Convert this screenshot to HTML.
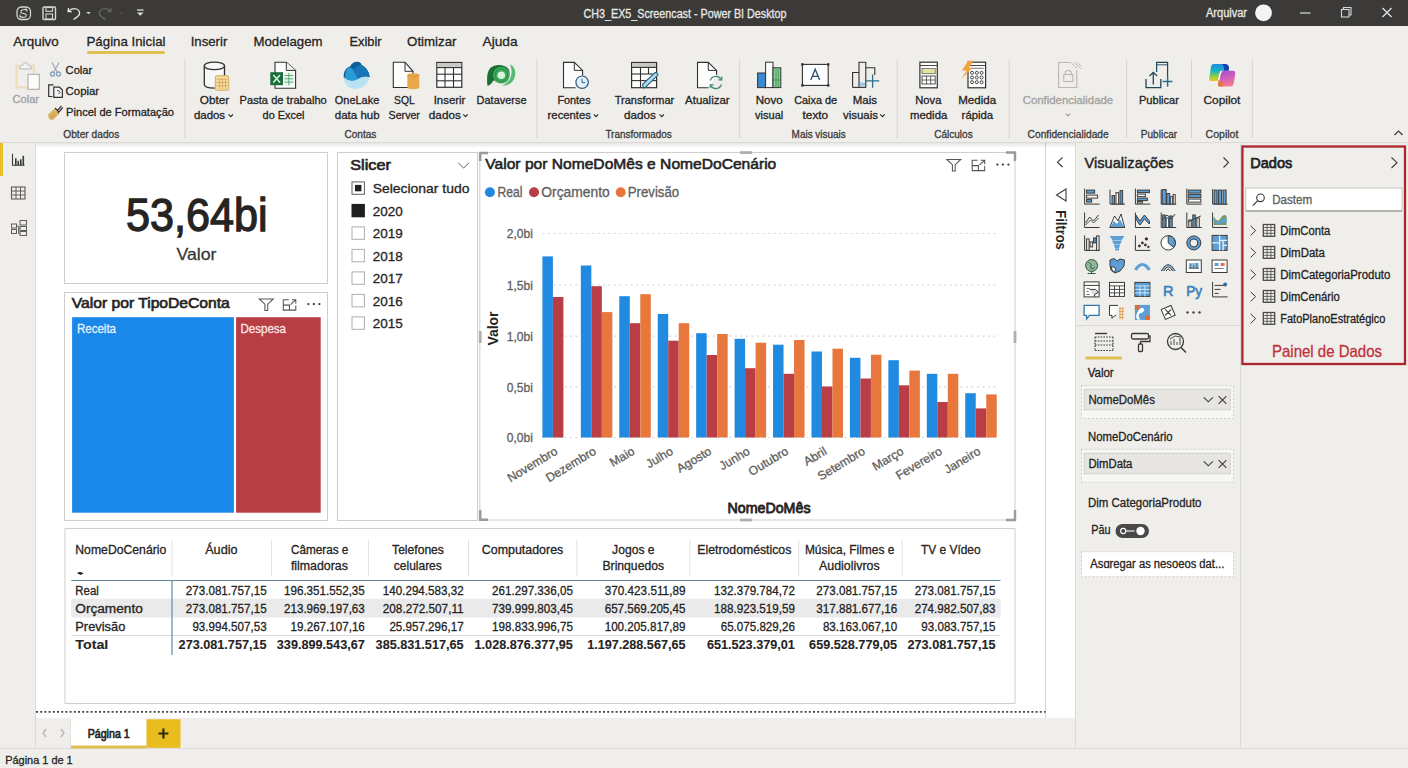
<!DOCTYPE html>
<html><head><meta charset="utf-8"><title>Power BI Desktop</title>
<style>
html,body{margin:0;padding:0;width:1408px;height:768px;overflow:hidden;background:#efeeeb;}
svg{display:block;font-family:"Liberation Sans",sans-serif;}
</style></head><body>
<svg width="1408" height="768" viewBox="0 0 1408 768">
<rect x="0" y="0" width="1408" height="768" fill="#efeeeb" />
<rect x="0" y="0" width="1408" height="26" fill="#3b3a38" />
<rect x="0" y="26" width="1408" height="116" fill="#efeeeb" />
<line x1="0" y1="142.5" x2="1408" y2="142.5" stroke="#dcdad6" stroke-width="1" />
<rect x="0" y="143" width="35" height="606" fill="#efeeeb" />
<line x1="35.5" y1="143" x2="35.5" y2="749" stroke="#dddbd7" stroke-width="1" />
<rect x="0" y="143" width="3" height="33" fill="#e6c02a" />
<rect x="36" y="143" width="1009" height="575" fill="#ffffff" />
<rect x="1046" y="143" width="29" height="575" fill="#ffffff" />
<line x1="1045.5" y1="143" x2="1045.5" y2="718" stroke="#d6d4d0" stroke-width="1" />
<line x1="1075.5" y1="143" x2="1075.5" y2="749" stroke="#dcdad6" stroke-width="1" />
<rect x="1076" y="143" width="164" height="606" fill="#efeeeb" />
<line x1="1240.5" y1="143" x2="1240.5" y2="749" stroke="#dcdad6" stroke-width="1" />
<rect x="1241" y="143" width="167" height="606" fill="#efeeeb" />
<rect x="36" y="718" width="1009" height="31" fill="#efeeeb" />
<line x1="0" y1="748.5" x2="1408" y2="748.5" stroke="#dddbd7" stroke-width="1" />
<rect x="0" y="749" width="1408" height="19" fill="#efeeeb" />
<defs><linearGradient id="rsh" x1="0" y1="0" x2="0" y2="1"><stop offset="0" stop-color="#000" stop-opacity="0.10"/><stop offset="1" stop-color="#000" stop-opacity="0"/></linearGradient></defs>
<rect x="36" y="143" width="1039" height="5" fill="url(#rsh)" />
<text x="583.5" y="17.5" font-size="12.5" fill="#e8e8e6" stroke="#e8e8e6" stroke-width="0.3" textLength="203" lengthAdjust="spacingAndGlyphs" >CH3_EX5_Screencast - Power BI Desktop</text>
<text x="1206" y="17.3" font-size="12" fill="#e8e8e6" stroke="#e8e8e6" stroke-width="0.3" textLength="41" lengthAdjust="spacingAndGlyphs" >Arquivar</text>
<circle cx="1263.5" cy="12.8" r="8.4" fill="#f4f4f4" />
<line x1="1300" y1="13" x2="1310.5" y2="13" stroke="#e0e0e0" stroke-width="1.2" />
<rect x="1341.5" y="9.5" width="7.5" height="7.5" fill="none" stroke="#d8d8d8" stroke-width="1.1" />
<path d="M1343.5,9.5 V7.5 H1351 V15 H1349" fill="none" stroke="#d8d8d8" stroke-width="1.1" />
<path d="M1382.5,8 L1391.5,17 M1391.5,8 L1382.5,17" fill="none" stroke="#e6e6e6" stroke-width="1.2" />
<rect x="17" y="7" width="13.5" height="12.5" fill="none" stroke="#d6d6d4" stroke-width="1.3" rx="4.5" />
<path d="M27,10.5 Q24.5,8.8 22,10 Q20,11.5 21.5,13 L25.5,14 Q27,15.2 25.5,17 Q23,18 20.5,16.5 M20,14.5 V17 H22.5 M24,9.5 L26.5,9.2 L27.2,11.5" fill="none" stroke="#d6d6d4" stroke-width="1.1" />
<rect x="43" y="7" width="12.5" height="12.5" fill="none" stroke="#d6d6d4" stroke-width="1.4" rx="1" />
<rect x="46" y="7.5" width="6.5" height="3.8" fill="none" stroke="#d6d6d4" stroke-width="1.1" />
<rect x="46" y="14" width="6.5" height="5" fill="none" stroke="#d6d6d4" stroke-width="1.1" />
<path d="M68.5,8 L68,11.5 L71.8,11.8 M68.3,11.3 Q72,7.5 76.5,9 Q80,10.5 79.5,14 Q79,16 73.5,19.5" fill="none" stroke="#e6e6e4" stroke-width="1.3" />
<path d="M86.2,12 h4.6 l-2.3,2.3 z" fill="#d6d6d4" />
<path d="M110.5,8 L111,11.5 L107.2,11.8 M110.7,11.3 Q107,7.5 102.5,9 Q99,10.5 99.5,14 Q100,16 105.5,19.5" fill="none" stroke="#666664" stroke-width="1.3" />
<circle cx="121.5" cy="12.8" r="0.9" fill="#666664" />
<line x1="137" y1="10" x2="143.5" y2="10" stroke="#e0e0de" stroke-width="1.3" />
<path d="M137,12.5 h6.5 l-3.25,3.2 z" fill="#e0e0de" />
<text x="13.3" y="45.9" font-size="13.5" fill="#252423" stroke="#252423" stroke-width="0.3" textLength="45.5" lengthAdjust="spacingAndGlyphs" >Arquivo</text>
<text x="86.5" y="45.9" font-size="13.5" fill="#252423" stroke="#252423" stroke-width="0.3" textLength="79" lengthAdjust="spacingAndGlyphs" >Página Inicial</text>
<text x="190.7" y="45.9" font-size="13.5" fill="#252423" stroke="#252423" stroke-width="0.3" textLength="36.6" lengthAdjust="spacingAndGlyphs" >Inserir</text>
<text x="253.5" y="45.9" font-size="13.5" fill="#252423" stroke="#252423" stroke-width="0.3" textLength="69" lengthAdjust="spacingAndGlyphs" >Modelagem</text>
<text x="349.5" y="45.9" font-size="13.5" fill="#252423" stroke="#252423" stroke-width="0.3" textLength="32" lengthAdjust="spacingAndGlyphs" >Exibir</text>
<text x="407.1" y="45.9" font-size="13.5" fill="#252423" stroke="#252423" stroke-width="0.3" textLength="49.4" lengthAdjust="spacingAndGlyphs" >Otimizar</text>
<text x="482.5" y="45.9" font-size="13.5" fill="#252423" stroke="#252423" stroke-width="0.3" textLength="35" lengthAdjust="spacingAndGlyphs" >Ajuda</text>
<rect x="87" y="51" width="78" height="3" fill="#dcc052" rx="1.5" />
<text x="12.6" y="103.3" font-size="11.2" fill="#a19f9d" stroke="#a19f9d" stroke-width="0.3" textLength="26.4" lengthAdjust="spacingAndGlyphs" >Colar</text>
<text x="65.6" y="73.9" font-size="11.2" fill="#252423" stroke="#252423" stroke-width="0.3" textLength="26.6" lengthAdjust="spacingAndGlyphs" >Colar</text>
<text x="65.6" y="95" font-size="11.2" fill="#252423" stroke="#252423" stroke-width="0.3" textLength="33.5" lengthAdjust="spacingAndGlyphs" >Copiar</text>
<text x="66.1" y="116" font-size="11.2" fill="#252423" stroke="#252423" stroke-width="0.3" textLength="107.9" lengthAdjust="spacingAndGlyphs" >Pincel de Formatação</text>
<text x="63.300000000000004" y="138.2" font-size="10.5" fill="#3b3a39" stroke="#3b3a39" stroke-width="0.3" textLength="56.0" lengthAdjust="spacingAndGlyphs" >Obter dados</text>
<line x1="184.8" y1="59" x2="184.8" y2="138" stroke="#d6d4d0" stroke-width="1" />
<line x1="536.8" y1="59" x2="536.8" y2="138" stroke="#d6d4d0" stroke-width="1" />
<line x1="739.6" y1="59" x2="739.6" y2="138" stroke="#d6d4d0" stroke-width="1" />
<line x1="897.2" y1="59" x2="897.2" y2="138" stroke="#d6d4d0" stroke-width="1" />
<line x1="1009.2" y1="59" x2="1009.2" y2="138" stroke="#d6d4d0" stroke-width="1" />
<line x1="1126.6" y1="59" x2="1126.6" y2="138" stroke="#d6d4d0" stroke-width="1" />
<line x1="1191.5" y1="59" x2="1191.5" y2="138" stroke="#d6d4d0" stroke-width="1" />
<line x1="1252.3" y1="59" x2="1252.3" y2="138" stroke="#d6d4d0" stroke-width="1" />
<text x="199.79999999999998" y="103.8" font-size="11.2" fill="#252423" stroke="#252423" stroke-width="0.3" textLength="29.4" lengthAdjust="spacingAndGlyphs" >Obter</text>
<text x="193.9" y="118.7" font-size="11.2" fill="#252423" stroke="#252423" stroke-width="0.3" textLength="31.2" lengthAdjust="spacingAndGlyphs" >dados</text>
<text x="239.6" y="103.8" font-size="11.2" fill="#252423" stroke="#252423" stroke-width="0.3" textLength="87.2" lengthAdjust="spacingAndGlyphs" >Pasta de trabalho</text>
<text x="262.6" y="118.7" font-size="11.2" fill="#252423" stroke="#252423" stroke-width="0.3" textLength="41.8" lengthAdjust="spacingAndGlyphs" >do Excel</text>
<text x="334.8" y="103.8" font-size="11.2" fill="#252423" stroke="#252423" stroke-width="0.3" textLength="44.5" lengthAdjust="spacingAndGlyphs" >OneLake</text>
<text x="334.8" y="118.7" font-size="11.2" fill="#252423" stroke="#252423" stroke-width="0.3" textLength="44.8" lengthAdjust="spacingAndGlyphs" >data hub</text>
<text x="394.0" y="103.8" font-size="11.2" fill="#252423" stroke="#252423" stroke-width="0.3" textLength="20.7" lengthAdjust="spacingAndGlyphs" >SQL</text>
<text x="388.6" y="118.7" font-size="11.2" fill="#252423" stroke="#252423" stroke-width="0.3" textLength="31.3" lengthAdjust="spacingAndGlyphs" >Server</text>
<text x="433.70000000000005" y="103.8" font-size="11.2" fill="#252423" stroke="#252423" stroke-width="0.3" textLength="31.7" lengthAdjust="spacingAndGlyphs" >Inserir</text>
<text x="428.8" y="118.7" font-size="11.2" fill="#252423" stroke="#252423" stroke-width="0.3" textLength="32.1" lengthAdjust="spacingAndGlyphs" >dados</text>
<text x="476.6" y="103.8" font-size="11.2" fill="#252423" stroke="#252423" stroke-width="0.3" textLength="49.9" lengthAdjust="spacingAndGlyphs" >Dataverse</text>
<text x="344.5" y="138.2" font-size="10.5" fill="#3b3a39" stroke="#3b3a39" stroke-width="0.3" textLength="31.9" lengthAdjust="spacingAndGlyphs" >Contas</text>
<text x="557.4" y="103.8" font-size="11.2" fill="#252423" stroke="#252423" stroke-width="0.3" textLength="33.2" lengthAdjust="spacingAndGlyphs" >Fontes</text>
<text x="547.6" y="118.7" font-size="11.2" fill="#252423" stroke="#252423" stroke-width="0.3" textLength="43.3" lengthAdjust="spacingAndGlyphs" >recentes</text>
<text x="614.8000000000001" y="103.8" font-size="11.2" fill="#252423" stroke="#252423" stroke-width="0.3" textLength="59.4" lengthAdjust="spacingAndGlyphs" >Transformar</text>
<text x="624.1" y="118.7" font-size="11.2" fill="#252423" stroke="#252423" stroke-width="0.3" textLength="31.8" lengthAdjust="spacingAndGlyphs" >dados</text>
<text x="685.1" y="103.8" font-size="11.2" fill="#252423" stroke="#252423" stroke-width="0.3" textLength="44.5" lengthAdjust="spacingAndGlyphs" >Atualizar</text>
<text x="605.4" y="138.2" font-size="10.5" fill="#3b3a39" stroke="#3b3a39" stroke-width="0.3" textLength="66.4" lengthAdjust="spacingAndGlyphs" >Transformados</text>
<text x="755.7" y="103.8" font-size="11.2" fill="#252423" stroke="#252423" stroke-width="0.3" textLength="27.0" lengthAdjust="spacingAndGlyphs" >Novo</text>
<text x="755.1" y="118.7" font-size="11.2" fill="#252423" stroke="#252423" stroke-width="0.3" textLength="28.2" lengthAdjust="spacingAndGlyphs" >visual</text>
<text x="794.2" y="103.8" font-size="11.2" fill="#252423" stroke="#252423" stroke-width="0.3" textLength="42.8" lengthAdjust="spacingAndGlyphs" >Caixa de</text>
<text x="802.6" y="118.7" font-size="11.2" fill="#252423" stroke="#252423" stroke-width="0.3" textLength="25.6" lengthAdjust="spacingAndGlyphs" >texto</text>
<text x="852.8000000000001" y="103.8" font-size="11.2" fill="#252423" stroke="#252423" stroke-width="0.3" textLength="24.2" lengthAdjust="spacingAndGlyphs" >Mais</text>
<text x="843.0" y="118.7" font-size="11.2" fill="#252423" stroke="#252423" stroke-width="0.3" textLength="34.9" lengthAdjust="spacingAndGlyphs" >visuais</text>
<text x="791.6" y="138.2" font-size="10.5" fill="#3b3a39" stroke="#3b3a39" stroke-width="0.3" textLength="54.2" lengthAdjust="spacingAndGlyphs" >Mais visuais</text>
<text x="915.3000000000001" y="103.8" font-size="11.2" fill="#252423" stroke="#252423" stroke-width="0.3" textLength="26.1" lengthAdjust="spacingAndGlyphs" >Nova</text>
<text x="910.0" y="118.7" font-size="11.2" fill="#252423" stroke="#252423" stroke-width="0.3" textLength="37.3" lengthAdjust="spacingAndGlyphs" >medida</text>
<text x="958.2" y="103.8" font-size="11.2" fill="#252423" stroke="#252423" stroke-width="0.3" textLength="37.9" lengthAdjust="spacingAndGlyphs" >Medida</text>
<text x="961.6" y="118.7" font-size="11.2" fill="#252423" stroke="#252423" stroke-width="0.3" textLength="31.6" lengthAdjust="spacingAndGlyphs" >rápida</text>
<text x="934.2" y="138.2" font-size="10.5" fill="#3b3a39" stroke="#3b3a39" stroke-width="0.3" textLength="38.5" lengthAdjust="spacingAndGlyphs" >Cálculos</text>
<text x="1022.7" y="103.8" font-size="11.2" fill="#a19f9d" stroke="#a19f9d" stroke-width="0.3" textLength="90.5" lengthAdjust="spacingAndGlyphs" >Confidencialidade</text>
<text x="1027.6" y="138.2" font-size="10.5" fill="#3b3a39" stroke="#3b3a39" stroke-width="0.3" textLength="81.1" lengthAdjust="spacingAndGlyphs" >Confidencialidade</text>
<text x="1139.0" y="103.8" font-size="11.2" fill="#252423" stroke="#252423" stroke-width="0.3" textLength="39.9" lengthAdjust="spacingAndGlyphs" >Publicar</text>
<text x="1140.8" y="138.2" font-size="10.5" fill="#3b3a39" stroke="#3b3a39" stroke-width="0.3" textLength="36.3" lengthAdjust="spacingAndGlyphs" >Publicar</text>
<text x="1203.5" y="103.8" font-size="11.2" fill="#252423" stroke="#252423" stroke-width="0.3" textLength="36.9" lengthAdjust="spacingAndGlyphs" >Copilot</text>
<text x="1205.6" y="138.2" font-size="10.5" fill="#3b3a39" stroke="#3b3a39" stroke-width="0.3" textLength="32.8" lengthAdjust="spacingAndGlyphs" >Copilot</text>
<path d="M228.60000000000002,114.4 l2.2,2.2 l2.2,-2.2" fill="none" stroke="#252423" stroke-width="1.1" />
<path d="M463.3,114.4 l2.2,2.2 l2.2,-2.2" fill="none" stroke="#252423" stroke-width="1.1" />
<path d="M593.8,114.4 l2.2,2.2 l2.2,-2.2" fill="none" stroke="#252423" stroke-width="1.1" />
<path d="M659.5999999999999,114.4 l2.2,2.2 l2.2,-2.2" fill="none" stroke="#252423" stroke-width="1.1" />
<path d="M880.3,114.4 l2.2,2.2 l2.2,-2.2" fill="none" stroke="#252423" stroke-width="1.1" />
<path d="M1065.8,113.7 l2.2,2.2 l2.2,-2.2" fill="none" stroke="#a19f9d" stroke-width="1.1" />
<path d="M1394.5,135 l4,-4 l4,4" fill="none" stroke="#3b3a39" stroke-width="1.2" />
<path d="M19.5,65.5 H16.5 V87.5 H27" fill="none" stroke="#eddcb6" stroke-width="2" />
<path d="M31,65.5 H34 V73" fill="none" stroke="#eddcb6" stroke-width="2" />
<path d="M19.5,69 Q19.5,65 23,65 Q24,62.3 25.5,62.3 Q27,62.3 28,65 Q31.5,65 31.5,69 Z" fill="#f3f2ef" stroke="#b8b6b2" stroke-width="1" />
<rect x="28" y="74.3" width="11.3" height="15" fill="#fbfbfa" stroke="#aeaca8" stroke-width="1.1" />
<path d="M52,62.5 L57.5,72.5 M59,62.5 L53.5,72.5" fill="none" stroke="#9aa2ab" stroke-width="1.1" />
<circle cx="52.5" cy="74" r="2" fill="none" stroke="#8aa0b8" stroke-width="1.3" />
<circle cx="58.5" cy="74" r="2" fill="none" stroke="#8aa0b8" stroke-width="1.3" />
<path d="M53.5,84.8 H48.7 V96.5 H52.5" fill="none" stroke="#323130" stroke-width="1.2" />
<path d="M53.8,87.2 H59.5 L62.4,90 V97.4 H53.8 Z" fill="#f6f6f6" stroke="#323130" stroke-width="1.2" />
<path d="M57,90.5 q2.5,-0.5 3,2 M58.5,94 l1.5,-1.5" fill="none" stroke="#323130" stroke-width="0.9" />
<path d="M48,114.5 L54.5,108.5 L59.5,113.5 L53.5,119.5 Q51,120.5 49.5,119 Q48.8,118.2 48.6,117.5 Z" fill="#dcb462" />
<path d="M49.5,117.5 L53.5,113.5 M51,119 L55.5,114.5" fill="none" stroke="#b88e3e" stroke-width="0.7" />
<path d="M55,108 L57.5,110.5 L61.5,105.8 M57.5,110.5 L58.5,112.5 L62.8,107.5" fill="none" stroke="#323130" stroke-width="1.2" />
<path d="M204.3,66 V84.3 Q204.3,88.2 214.4,88.2 Q224.5,88.2 224.5,84.3 V66 Z" fill="#f8f8f7" />
<path d="M204.3,66 V84.3 Q204.3,88.2 214.8,88.2 M224.5,66 V76" fill="none" stroke="#323130" stroke-width="1.3" />
<ellipse cx="214.4" cy="65.9" rx="10.1" ry="3.8" fill="#f8f8f7" stroke="#323130" stroke-width="1.3"/>
<rect x="215.3" y="75.8" width="13.4" height="14.4" fill="#f6dca2" stroke="#d4a957" stroke-width="1" rx="1.2" />
<line x1="216.5" y1="79.2" x2="227.5" y2="79.2" stroke="#c99a4a" stroke-width="0.7" />
<line x1="216.5" y1="82.5" x2="227.5" y2="82.5" stroke="#c99a4a" stroke-width="0.7" />
<line x1="216.5" y1="85.8" x2="227.5" y2="85.8" stroke="#c99a4a" stroke-width="0.7" />
<line x1="219.5" y1="79" x2="219.5" y2="89" stroke="#c99a4a" stroke-width="0.6" />
<line x1="222.5" y1="79" x2="222.5" y2="89" stroke="#c99a4a" stroke-width="0.6" />
<line x1="225.5" y1="79" x2="225.5" y2="89" stroke="#c99a4a" stroke-width="0.6" />
<path d="M275,62.2 H286.3 L295.6,70.4 V88.3 H275 Z" fill="#fdfdfd" stroke="#323130" stroke-width="1.1" />
<path d="M286.3,62.2 V70.4 H295.6" fill="#f0f0f0" stroke="#323130" stroke-width="1" />
<rect x="284" y="72.5" width="10" height="13" fill="#e8f6ec" />
<line x1="284.5" y1="75.5" x2="293.3" y2="75.5" stroke="#3f9a63" stroke-width="0.8" />
<line x1="284.5" y1="78.8" x2="293.3" y2="78.8" stroke="#3f9a63" stroke-width="0.8" />
<line x1="284.5" y1="82.1" x2="293.3" y2="82.1" stroke="#3f9a63" stroke-width="0.8" />
<line x1="288.8" y1="73" x2="288.8" y2="85.5" stroke="#3f9a63" stroke-width="0.8" />
<rect x="270.3" y="72.2" width="12.7" height="13" fill="#1c6b3a" />
<path d="M273.3,75 L280,82.5 M280,75 L273.3,82.5" fill="none" stroke="#c6f2d2" stroke-width="1.7" />
<path d="M343.6,77 Q344.5,88.5 354.5,89 Q366.5,88.8 369.8,77 Q362,75 356,79.5 Q350,82.5 343.6,77 Z" fill="#b9e3f3" />
<path d="M343.6,77 Q343,69 350,66.5 Q352.5,61.5 357.5,61.8 Q361,62.2 361.5,64.8 Q368.5,68 369.8,77 Q362,75 356,79.5 Q350,82.5 343.6,77 Z" fill="#0f5e9c" />
<path d="M346.8,69 Q350.5,66.5 353,69.5 L358.2,79 Q352,82.5 345.6,78.5 Q344.6,72.5 346.8,69 Z" fill="#2b9bd6" />
<path d="M353,69.5 Q357,65.5 361.5,65 Q367.5,68.5 369.5,76.5 Q363,75 358.2,79 Z" fill="#1776b8" />
<path d="M393.3,62.2 H405 L413,71.3 V87.5 H393.3 Z" fill="#fdfdfd" stroke="#323130" stroke-width="1.1" />
<path d="M405,62.2 V71.3 H413" fill="none" stroke="#323130" stroke-width="1" />
<path d="M407.3,75.5 Q407.3,73.3 413.3,73.3 Q419.3,73.3 419.3,75.5 V87 Q419.3,89.2 413.3,89.2 Q407.3,89.2 407.3,87 Z" fill="#e9a94a" />
<path d="M407.3,75.5 Q413.3,78 419.3,75.5" fill="none" stroke="#cf8e30" stroke-width="0.8" />
<rect x="436.8" y="62.5" width="25" height="24.8" fill="#fdfdfd" stroke="#323130" stroke-width="1.2" />
<rect x="437.4" y="63.1" width="23.8" height="4.4" fill="#c9c8c5" />
<line x1="436.8" y1="67.6" x2="461.8" y2="67.6" stroke="#323130" stroke-width="1.1" />
<line x1="436.8" y1="74.2" x2="461.8" y2="74.2" stroke="#323130" stroke-width="1.1" />
<line x1="436.8" y1="80.8" x2="461.8" y2="80.8" stroke="#323130" stroke-width="1.1" />
<line x1="445" y1="67.6" x2="445" y2="87.3" stroke="#323130" stroke-width="1.1" />
<line x1="453.5" y1="67.6" x2="453.5" y2="87.3" stroke="#323130" stroke-width="1.1" />
<path d="M487.5,86 Q485.8,73 490.5,67.8 Q496,63 505.5,66.5 Q511,69.5 509,75 L493,81 Q491,85 487.5,86 Z" fill="#1a6f34" />
<path d="M502,85.8 Q512.5,85.5 515,76.5 Q516.5,67.5 510,64.3 Q513.5,73 509.5,79.5 Q506.5,84 502,85.8 Z" fill="#56bb70" />
<circle cx="501.3" cy="75.2" r="8.4" fill="#3ea85c" />
<circle cx="501.3" cy="75.2" r="6.3" fill="none" stroke="#2d8d49" stroke-width="1" />
<circle cx="501.3" cy="75.2" r="3.8" fill="#d6f6d6" />
<path d="M575.5,87.7 H563.5 V62.4 H574.3 L582.6,70.4 V75.6" fill="#fdfdfd" stroke="#323130" stroke-width="1.1" />
<path d="M574.3,62.4 V70.4 H582.6" fill="none" stroke="#323130" stroke-width="1" />
<circle cx="582.1" cy="82.2" r="6.2" fill="#e3f1fa" stroke="#2b5b7e" stroke-width="1.2" />
<path d="M582,78.8 V82.6 H585" fill="none" stroke="#2b5b7e" stroke-width="1" />
<rect x="631.6" y="62.5" width="25" height="25.2" fill="#fdfdfd" stroke="#323130" stroke-width="1.2" />
<rect x="632.2" y="63.1" width="23.8" height="4.2" fill="#c9c8c5" />
<line x1="631.6" y1="67.4" x2="656.6" y2="67.4" stroke="#323130" stroke-width="1.1" />
<line x1="631.6" y1="74" x2="656.6" y2="74" stroke="#323130" stroke-width="1.1" />
<line x1="631.6" y1="80.6" x2="656.6" y2="80.6" stroke="#323130" stroke-width="1.1" />
<line x1="640.5" y1="67.4" x2="640.5" y2="87.7" stroke="#323130" stroke-width="1.1" />
<line x1="648.5" y1="67.4" x2="648.5" y2="74" stroke="#323130" stroke-width="1.1" />
<path d="M643.5,88 L642.5,84.5 L655,72.5 Q657.5,72.3 658,74.8 L645.8,87 Z" fill="#b5dcf0" stroke="#2a6282" stroke-width="1.1" />
<path d="M708.5,87.7 H697.5 V62.4 H708.3 L716.6,70.4 V75" fill="#fdfdfd" stroke="#323130" stroke-width="1.1" />
<path d="M708.3,62.4 V70.4 H716.6" fill="none" stroke="#323130" stroke-width="1" />
<path d="M710.3,80.5 A6,6 0 0 1 721.2,79.5 M721.5,84.5 A6,6 0 0 1 710.6,85.5" fill="none" stroke="#3d8b73" stroke-width="1.3" />
<path d="M721.8,76.5 V79.8 H718.5 M710.2,88 V84.8 H713.5" fill="none" stroke="#3d8b73" stroke-width="1.2" />
<rect x="757.6" y="73" width="8" height="14.6" fill="#3b8ad0" stroke="#323130" stroke-width="1" />
<rect x="765.6" y="62.2" width="7.4" height="25.4" fill="#fdfdfd" stroke="#323130" stroke-width="1" />
<rect x="773" y="67.8" width="7.8" height="19.8" fill="#8fd09a" stroke="#323130" stroke-width="1" />
<line x1="776" y1="69" x2="776" y2="87" stroke="#2f8a44" stroke-width="0.8" />
<line x1="778.3" y1="69" x2="778.3" y2="87" stroke="#2f8a44" stroke-width="0.8" />
<line x1="773" y1="80" x2="781" y2="80" stroke="#2f8a44" stroke-width="0.8" />
<rect x="802.4" y="64.4" width="25.8" height="21" fill="#fbfdff" stroke="#323130" stroke-width="1.1" />
<rect x="801.1999999999999" y="63.2" width="2.4" height="2.4" fill="#323130" />
<rect x="827.0" y="63.2" width="2.4" height="2.4" fill="#323130" />
<rect x="801.1999999999999" y="84.2" width="2.4" height="2.4" fill="#323130" />
<rect x="827.0" y="84.2" width="2.4" height="2.4" fill="#323130" />
<path d="M810.8,80 L815.2,69.2 L819.6,80 M812.4,76.3 H818" fill="none" stroke="#2b4f6c" stroke-width="1.3" />
<path d="M852.6,87.4 V72.5 H859 M859,87.4 V62.2 H865.8 V87.4 M865.8,67.8 H874.8 V75" fill="none" stroke="#323130" stroke-width="1.1" />
<line x1="852.6" y1="87.4" x2="866" y2="87.4" stroke="#323130" stroke-width="1.1" />
<path d="M872.6,74.5 V87.8 M866,80.8 H879.2" fill="none" stroke="#2b6f8e" stroke-width="1.3" />
<rect x="860" y="82.5" width="5" height="4" fill="#9ac8e6" />
<rect x="919.9" y="62.2" width="17.4" height="25.6" fill="#fdfdfd" stroke="#323130" stroke-width="1.2" />
<line x1="920" y1="65.5" x2="937.2" y2="65.5" stroke="#323130" stroke-width="0.9" />
<rect x="922" y="68.5" width="13.2" height="5.2" fill="#e5e3a2" stroke="#555" stroke-width="0.7" />
<rect x="922" y="76" width="13.2" height="8" fill="none" stroke="#444" stroke-width="0.9" />
<line x1="922" y1="80" x2="935.2" y2="80" stroke="#444" stroke-width="0.8" />
<line x1="926.5" y1="76" x2="926.5" y2="84" stroke="#444" stroke-width="0.8" />
<line x1="930.7" y1="76" x2="930.7" y2="84" stroke="#444" stroke-width="0.8" />
<rect x="968" y="62.2" width="17.6" height="25.6" fill="#fdfdfd" stroke="#323130" stroke-width="1.2" />
<line x1="968" y1="65.5" x2="985.6" y2="65.5" stroke="#323130" stroke-width="0.9" />
<line x1="970" y1="68.3" x2="983.6" y2="68.3" stroke="#555" stroke-width="0.8" />
<circle cx="972.0" cy="72.8" r="1.5" fill="none" stroke="#333" stroke-width="0.9" />
<circle cx="976.8" cy="72.8" r="1.5" fill="none" stroke="#333" stroke-width="0.9" />
<circle cx="981.6" cy="72.8" r="1.5" fill="none" stroke="#333" stroke-width="0.9" />
<circle cx="972.0" cy="77.5" r="1.5" fill="none" stroke="#333" stroke-width="0.9" />
<circle cx="976.8" cy="77.5" r="1.5" fill="none" stroke="#333" stroke-width="0.9" />
<circle cx="981.6" cy="77.5" r="1.5" fill="none" stroke="#333" stroke-width="0.9" />
<circle cx="972.0" cy="82.2" r="1.5" fill="none" stroke="#333" stroke-width="0.9" />
<circle cx="976.8" cy="82.2" r="1.5" fill="none" stroke="#333" stroke-width="0.9" />
<circle cx="981.6" cy="82.2" r="1.5" fill="none" stroke="#333" stroke-width="0.9" />
<path d="M968,60.8 L962,70.5 H966.5 L961.5,78.8 L972.5,67.8 H968.5 L973.8,60.8 Z" fill="#f0a53a" />
<path d="M1070.5,62.5 H1058.6 V87.5 H1076.8 V70" fill="none" stroke="#b9b7b3" stroke-width="1.1" />
<path d="M1071,62.5 L1077,68.5 M1074.5,62.3 L1081,68.8 M1077,62 L1081.5,66.5" fill="none" stroke="#b9b7b3" stroke-width="1" />
<rect x="1063.8" y="74.5" width="9" height="7" fill="none" stroke="#b9b7b3" stroke-width="1.1" />
<path d="M1065.3,74.5 V72 Q1068.3,68.8 1071.3,72 V74.5" fill="none" stroke="#b9b7b3" stroke-width="1.1" />
<path d="M1156.6,72 V62.4 H1167.6 V86.5" fill="none" stroke="#20465c" stroke-width="1.2" />
<line x1="1156.6" y1="64.8" x2="1167.6" y2="64.8" stroke="#20465c" stroke-width="0.9" />
<path d="M1146,79 V87.6 H1160.8 V79" fill="none" stroke="#20465c" stroke-width="1.3" />
<path d="M1153.3,84.5 V72.3 M1149.5,76 L1153.3,72.3 L1157.1,76" fill="none" stroke="#20465c" stroke-width="1.3" />
<path d="M1167.5,76.5 V86.5 M1162.5,81.5 H1172.5" fill="none" stroke="#2e6f8c" stroke-width="1.3" />
<defs><linearGradient id="cpL" x1="0" y1="0" x2="0" y2="1"><stop offset="0" stop-color="#1f8ee0"/><stop offset="0.4" stop-color="#17b2c4"/><stop offset="0.75" stop-color="#9ccf3a"/><stop offset="1" stop-color="#e9c430"/></linearGradient><linearGradient id="cpR" x1="0" y1="0" x2="0.3" y2="1"><stop offset="0" stop-color="#9d52d6"/><stop offset="0.6" stop-color="#d75fb8"/><stop offset="1" stop-color="#f27c92"/></linearGradient></defs>
<path d="M1213.5,64 H1225 Q1228.5,64 1229,67.5 L1228.5,70.8 H1222.5 Q1220.5,71 1220,73.5 L1218.5,79.5 Q1218,81 1216,81 H1211 Q1208.8,81 1209.2,78.5 L1211,66.5 Q1211.5,64 1213.5,64 Z" fill="url(#cpL)" />
<path d="M1222,64 H1225 Q1228.5,64 1229,67.5 L1228.5,70.8 H1224 Q1224.5,66 1222,64 Z" fill="#1a3fa8" />
<path d="M1222.5,70.8 H1233 Q1235.7,71 1235.3,73.8 L1233.6,84 Q1233,86.6 1230.5,86.6 H1219.5 Q1217.5,86.6 1218,84.5 L1220,73.5 Q1220.5,71 1222.5,70.8 Z" fill="url(#cpR)" />
<path d="M1218.6,80.5 L1218,84.3 Q1217.9,86.6 1220,86.6 H1222.8 Q1223.2,83.5 1221.5,80.8 Z" fill="#e27a3a" />
<path d="M1222,71.2 Q1220.5,71.5 1220,74 L1218.8,80" fill="none" stroke="#ffffff" stroke-width="1.4" />
<path d="M12.5,153.8 V165.3 H24.5" fill="none" stroke="#3b3a39" stroke-width="1.1" />
<rect x="15" y="158.3" width="1.6" height="7" fill="#3b3a39" />
<rect x="17.5" y="160.8" width="1.6" height="4.5" fill="#3b3a39" />
<rect x="20" y="159.3" width="1.6" height="6" fill="#3b3a39" />
<rect x="22.5" y="155.8" width="1.6" height="9.5" fill="#3b3a39" />
<rect x="11.5" y="187" width="13.5" height="12" fill="none" stroke="#605e5c" stroke-width="1.1" />
<line x1="11.5" y1="191" x2="25" y2="191" stroke="#605e5c" stroke-width="1" />
<line x1="11.5" y1="195" x2="25" y2="195" stroke="#605e5c" stroke-width="1" />
<line x1="16" y1="187" x2="16" y2="199" stroke="#605e5c" stroke-width="1" />
<line x1="20.5" y1="187" x2="20.5" y2="199" stroke="#605e5c" stroke-width="1" />
<rect x="11.5" y="224" width="5" height="4" fill="none" stroke="#605e5c" stroke-width="1" />
<rect x="11.5" y="229.5" width="5" height="4" fill="none" stroke="#605e5c" stroke-width="1" />
<rect x="20" y="220.5" width="6.5" height="4.5" fill="none" stroke="#605e5c" stroke-width="1" />
<rect x="20" y="226.5" width="6.5" height="4" fill="none" stroke="#605e5c" stroke-width="1" />
<rect x="20" y="231.5" width="6.5" height="4" fill="none" stroke="#605e5c" stroke-width="1" />
<path d="M16.5,226 H18.5 V233.5 H20 M18.5,228.5 H20" fill="none" stroke="#605e5c" stroke-width="0.9" />
<rect x="64.5" y="152.5" width="263" height="131" fill="#ffffff" stroke="#d0cecc" stroke-width="1" />
<rect x="64.5" y="292.5" width="263" height="228" fill="#ffffff" stroke="#d0cecc" stroke-width="1" />
<rect x="337.5" y="152.5" width="140" height="368" fill="#ffffff" stroke="#d0cecc" stroke-width="1" />
<rect x="65" y="528.5" width="950" height="175" fill="#ffffff" stroke="#d0cecc" stroke-width="1" />
<text x="126" y="230.5" font-size="46" fill="#252423" stroke="#252423" stroke-width="1.3" textLength="141.5" lengthAdjust="spacingAndGlyphs" >53,64bi</text>
<text x="176.5" y="259.6" font-size="16.5" fill="#3b3a39" stroke="#3b3a39" stroke-width="0.3" textLength="40" lengthAdjust="spacingAndGlyphs" >Valor</text>
<text x="71.8" y="308.4" font-size="14.5" fill="#252423" stroke="#252423" stroke-width="0.65" textLength="158" lengthAdjust="spacingAndGlyphs" >Valor por TipoDeConta</text>
<path d="M259.3,298.9 H273.3 L267.7,304.2 V310.5 H264.90000000000003 V304.2 Z" fill="none" stroke="#555453" stroke-width="1.05" />
<path d="M288.8,299.7 H283.3 V310.1 H295.8 V305.5" fill="none" stroke="#555453" stroke-width="1.05" />
<path d="M283.3,305.1 H289.5 V310.1" fill="none" stroke="#555453" stroke-width="1.05" />
<path d="M290.5,304.7 L295.6,299.9 M291.8,299.7 H295.8 V303.7" fill="none" stroke="#555453" stroke-width="1.05" />
<circle cx="308.4" cy="304.1" r="1.15" fill="#3b3a39" />
<circle cx="313.9" cy="304.1" r="1.15" fill="#3b3a39" />
<circle cx="319.4" cy="304.1" r="1.15" fill="#3b3a39" />
<rect x="72.1" y="317.2" width="161.8" height="195.5" fill="#1a88e9" />
<rect x="236.1" y="317.2" width="84.6" height="195.5" fill="#b83e45" />
<text x="77" y="332.5" font-size="12.5" fill="#e2f2ff" stroke="#e2f2ff" stroke-width="0.3" textLength="39" lengthAdjust="spacingAndGlyphs" >Receita</text>
<text x="240.5" y="332.5" font-size="12.5" fill="#fde6e6" stroke="#fde6e6" stroke-width="0.3" textLength="45.5" lengthAdjust="spacingAndGlyphs" >Despesa</text>
<text x="350.3" y="169.7" font-size="14.5" fill="#252423" stroke="#252423" stroke-width="0.65" textLength="40.5" lengthAdjust="spacingAndGlyphs" >Slicer</text>
<path d="M458.3,162.8 L463.6,168.1 L469,162.8" fill="none" stroke="#605e5c" stroke-width="1" />
<rect x="352" y="181.9" width="12.4" height="12.4" fill="#ffffff" stroke="#605e5c" stroke-width="1" />
<rect x="355" y="184.9" width="6.4" height="6.4" fill="#1f1f1f" />
<text x="372.7" y="193.4" font-size="13.5" fill="#252423" stroke="#252423" stroke-width="0.3" textLength="96.8" lengthAdjust="spacingAndGlyphs" >Selecionar tudo</text>
<rect x="351.5" y="203.9" width="13.4" height="13.4" fill="#1f1f1f" />
<text x="372.7" y="215.9" font-size="13.5" fill="#252423" stroke="#252423" stroke-width="0.3" textLength="30" lengthAdjust="spacingAndGlyphs" >2020</text>
<rect x="352" y="226.9" width="12.4" height="12.4" fill="#ffffff" stroke="#b0aeab" stroke-width="1" />
<text x="372.7" y="238.4" font-size="13.5" fill="#252423" stroke="#252423" stroke-width="0.3" textLength="30" lengthAdjust="spacingAndGlyphs" >2019</text>
<rect x="352" y="249.39999999999998" width="12.4" height="12.4" fill="#ffffff" stroke="#b0aeab" stroke-width="1" />
<text x="372.7" y="260.9" font-size="13.5" fill="#252423" stroke="#252423" stroke-width="0.3" textLength="30" lengthAdjust="spacingAndGlyphs" >2018</text>
<rect x="352" y="271.9" width="12.4" height="12.4" fill="#ffffff" stroke="#b0aeab" stroke-width="1" />
<text x="372.7" y="283.4" font-size="13.5" fill="#252423" stroke="#252423" stroke-width="0.3" textLength="30" lengthAdjust="spacingAndGlyphs" >2017</text>
<rect x="352" y="294.4" width="12.4" height="12.4" fill="#ffffff" stroke="#b0aeab" stroke-width="1" />
<text x="372.7" y="305.9" font-size="13.5" fill="#252423" stroke="#252423" stroke-width="0.3" textLength="30" lengthAdjust="spacingAndGlyphs" >2016</text>
<rect x="352" y="316.9" width="12.4" height="12.4" fill="#ffffff" stroke="#b0aeab" stroke-width="1" />
<text x="372.7" y="328.4" font-size="13.5" fill="#252423" stroke="#252423" stroke-width="0.3" textLength="30" lengthAdjust="spacingAndGlyphs" >2015</text>
<rect x="479.8" y="152.5" width="535.2" height="367.5" fill="#ffffff" stroke="#d0cecc" stroke-width="1" />
<path d="M480.2,161 V153 H488" fill="none" stroke="#9b9a98" stroke-width="2.6" />
<path d="M1006,152.5 H1015 V161" fill="none" stroke="#9b9a98" stroke-width="2.4" />
<path d="M480.2,510 V519.7 H488" fill="none" stroke="#9b9a98" stroke-width="2.6" />
<path d="M1006,520 H1015 V510" fill="none" stroke="#9b9a98" stroke-width="2.4" />
<rect x="478.8" y="331" width="2.8" height="12" fill="#b0afad" />
<rect x="1013.6" y="331" width="2.8" height="12" fill="#b0afad" />
<rect x="740" y="151.2" width="12" height="2.8" fill="#b0afad" />
<rect x="740" y="518.6" width="12" height="2.8" fill="#b0afad" />
<text x="485.3" y="168.7" font-size="15.5" fill="#252423" stroke="#252423" stroke-width="0.6" textLength="291" lengthAdjust="spacingAndGlyphs" >Valor por NomeDoMês e NomeDoCenário</text>
<path d="M946.8,159.4 H960.8 L955.1999999999999,164.7 V171 H952.4 V164.7 Z" fill="none" stroke="#555453" stroke-width="1.05" />
<path d="M977.7,160.2 H972.2 V170.6 H984.7 V166" fill="none" stroke="#555453" stroke-width="1.05" />
<path d="M972.2,165.6 H978.4000000000001 V170.6" fill="none" stroke="#555453" stroke-width="1.05" />
<path d="M979.4000000000001,165.2 L984.5,160.4 M980.7,160.2 H984.7 V164.2" fill="none" stroke="#555453" stroke-width="1.05" />
<circle cx="997.4000000000001" cy="164.6" r="1.15" fill="#3b3a39" />
<circle cx="1002.9000000000001" cy="164.6" r="1.15" fill="#3b3a39" />
<circle cx="1008.4000000000001" cy="164.6" r="1.15" fill="#3b3a39" />
<circle cx="489.9" cy="192.3" r="5" fill="#2089e0" />
<circle cx="534" cy="192.3" r="5" fill="#b83d45" />
<circle cx="620.7" cy="192.3" r="5" fill="#e7773d" />
<text x="497.5" y="197.1" font-size="14" fill="#605e5c" stroke="#605e5c" stroke-width="0.3" textLength="25" lengthAdjust="spacingAndGlyphs" >Real</text>
<text x="541.3" y="197.1" font-size="14" fill="#605e5c" stroke="#605e5c" stroke-width="0.3" textLength="68.5" lengthAdjust="spacingAndGlyphs" >Orçamento</text>
<text x="627.7" y="197.1" font-size="14" fill="#605e5c" stroke="#605e5c" stroke-width="0.3" textLength="51.5" lengthAdjust="spacingAndGlyphs" >Previsão</text>
<line x1="542.5" y1="233.5" x2="996" y2="233.5" stroke="#d6d6d6" stroke-width="1.2" stroke-dasharray="2 3.5"/>
<text x="532.8" y="238.3" font-size="12.5" fill="#605e5c" stroke="#605e5c" stroke-width="0.3" text-anchor="end" textLength="26" lengthAdjust="spacingAndGlyphs" >2,0bi</text>
<line x1="542.5" y1="285" x2="996" y2="285" stroke="#d6d6d6" stroke-width="1.2" stroke-dasharray="2 3.5"/>
<text x="532.8" y="289.8" font-size="12.5" fill="#605e5c" stroke="#605e5c" stroke-width="0.3" text-anchor="end" textLength="26" lengthAdjust="spacingAndGlyphs" >1,5bi</text>
<line x1="542.5" y1="336.2" x2="996" y2="336.2" stroke="#d6d6d6" stroke-width="1.2" stroke-dasharray="2 3.5"/>
<text x="532.8" y="341.0" font-size="12.5" fill="#605e5c" stroke="#605e5c" stroke-width="0.3" text-anchor="end" textLength="26" lengthAdjust="spacingAndGlyphs" >1,0bi</text>
<line x1="542.5" y1="386.9" x2="996" y2="386.9" stroke="#d6d6d6" stroke-width="1.2" stroke-dasharray="2 3.5"/>
<text x="532.8" y="391.7" font-size="12.5" fill="#605e5c" stroke="#605e5c" stroke-width="0.3" text-anchor="end" textLength="26" lengthAdjust="spacingAndGlyphs" >0,5bi</text>
<line x1="542.5" y1="437.5" x2="996" y2="437.5" stroke="#d6d6d6" stroke-width="1.2" stroke-dasharray="2 3.5"/>
<text x="532.8" y="442.3" font-size="12.5" fill="#605e5c" stroke="#605e5c" stroke-width="0.3" text-anchor="end" textLength="26" lengthAdjust="spacingAndGlyphs" >0,0bi</text>
<rect x="542.4" y="256.4" width="10.5" height="181.1" fill="#2089e0" />
<rect x="552.9" y="297" width="10.5" height="140.5" fill="#b83d45" />
<text x="558.65" y="453.5" font-size="12.2" fill="#605e5c" stroke="#605e5c" stroke-width="0.3" text-anchor="end" transform="rotate(-31 558.65 453.5)">Novembro</text>
<rect x="580.84" y="265.5" width="10.5" height="172.0" fill="#2089e0" />
<rect x="591.34" y="286.2" width="10.5" height="151.3" fill="#b83d45" />
<rect x="601.84" y="312.1" width="10.5" height="125.4" fill="#e7773d" />
<text x="597.09" y="453.5" font-size="12.2" fill="#605e5c" stroke="#605e5c" stroke-width="0.3" text-anchor="end" transform="rotate(-31 597.09 453.5)">Dezembro</text>
<rect x="619.28" y="296.2" width="10.5" height="141.3" fill="#2089e0" />
<rect x="629.78" y="323.2" width="10.5" height="114.3" fill="#b83d45" />
<rect x="640.28" y="294.2" width="10.5" height="143.3" fill="#e7773d" />
<text x="635.53" y="453.5" font-size="12.2" fill="#605e5c" stroke="#605e5c" stroke-width="0.3" text-anchor="end" transform="rotate(-31 635.53 453.5)">Maio</text>
<rect x="657.72" y="314" width="10.5" height="123.5" fill="#2089e0" />
<rect x="668.22" y="340.7" width="10.5" height="96.8" fill="#b83d45" />
<rect x="678.72" y="323.2" width="10.5" height="114.3" fill="#e7773d" />
<text x="673.97" y="453.5" font-size="12.2" fill="#605e5c" stroke="#605e5c" stroke-width="0.3" text-anchor="end" transform="rotate(-31 673.97 453.5)">Julho</text>
<rect x="696.16" y="333.2" width="10.5" height="104.3" fill="#2089e0" />
<rect x="706.66" y="355" width="10.5" height="82.5" fill="#b83d45" />
<rect x="717.16" y="334" width="10.5" height="103.5" fill="#e7773d" />
<text x="712.41" y="453.5" font-size="12.2" fill="#605e5c" stroke="#605e5c" stroke-width="0.3" text-anchor="end" transform="rotate(-31 712.41 453.5)">Agosto</text>
<rect x="734.6" y="338.8" width="10.5" height="98.7" fill="#2089e0" />
<rect x="745.1" y="368.2" width="10.5" height="69.3" fill="#b83d45" />
<rect x="755.6" y="342.7" width="10.5" height="94.8" fill="#e7773d" />
<text x="750.85" y="453.5" font-size="12.2" fill="#605e5c" stroke="#605e5c" stroke-width="0.3" text-anchor="end" transform="rotate(-31 750.85 453.5)">Junho</text>
<rect x="773.04" y="344.7" width="10.5" height="92.8" fill="#2089e0" />
<rect x="783.54" y="373.8" width="10.5" height="63.7" fill="#b83d45" />
<rect x="794.04" y="340" width="10.5" height="97.5" fill="#e7773d" />
<text x="789.29" y="453.5" font-size="12.2" fill="#605e5c" stroke="#605e5c" stroke-width="0.3" text-anchor="end" transform="rotate(-31 789.29 453.5)">Outubro</text>
<rect x="811.48" y="351.5" width="10.5" height="86.0" fill="#2089e0" />
<rect x="821.98" y="386.5" width="10.5" height="51.0" fill="#b83d45" />
<rect x="832.48" y="348.7" width="10.5" height="88.8" fill="#e7773d" />
<text x="827.73" y="453.5" font-size="12.2" fill="#605e5c" stroke="#605e5c" stroke-width="0.3" text-anchor="end" transform="rotate(-31 827.73 453.5)">Abril</text>
<rect x="849.92" y="357.8" width="10.5" height="79.7" fill="#2089e0" />
<rect x="860.42" y="378.5" width="10.5" height="59.0" fill="#b83d45" />
<rect x="870.92" y="354.7" width="10.5" height="82.8" fill="#e7773d" />
<text x="866.17" y="453.5" font-size="12.2" fill="#605e5c" stroke="#605e5c" stroke-width="0.3" text-anchor="end" transform="rotate(-31 866.17 453.5)">Setembro</text>
<rect x="888.36" y="360.2" width="10.5" height="77.3" fill="#2089e0" />
<rect x="898.86" y="385.3" width="10.5" height="52.2" fill="#b83d45" />
<rect x="909.36" y="370.6" width="10.5" height="66.9" fill="#e7773d" />
<text x="904.61" y="453.5" font-size="12.2" fill="#605e5c" stroke="#605e5c" stroke-width="0.3" text-anchor="end" transform="rotate(-31 904.61 453.5)">Março</text>
<rect x="926.8" y="373.8" width="10.5" height="63.7" fill="#2089e0" />
<rect x="937.3" y="402" width="10.5" height="35.5" fill="#b83d45" />
<rect x="947.8" y="373.8" width="10.5" height="63.7" fill="#e7773d" />
<text x="943.05" y="453.5" font-size="12.2" fill="#605e5c" stroke="#605e5c" stroke-width="0.3" text-anchor="end" transform="rotate(-31 943.05 453.5)">Fevereiro</text>
<rect x="965.24" y="393.2" width="10.5" height="44.3" fill="#2089e0" />
<rect x="975.74" y="408.4" width="10.5" height="29.1" fill="#b83d45" />
<rect x="986.24" y="394.4" width="10.5" height="43.1" fill="#e7773d" />
<text x="981.49" y="453.5" font-size="12.2" fill="#605e5c" stroke="#605e5c" stroke-width="0.3" text-anchor="end" transform="rotate(-31 981.49 453.5)">Janeiro</text>
<text x="498" y="328.5" font-size="15" fill="#252423" font-weight="bold" text-anchor="middle" textLength="34" lengthAdjust="spacingAndGlyphs" transform="rotate(-90 498 328.5)">Valor</text>
<text x="727.5" y="513" font-size="15.5" fill="#252423" stroke="#252423" stroke-width="0.85" textLength="83" lengthAdjust="spacingAndGlyphs" >NomeDoMês</text>
<text x="75.3" y="554.3" font-size="12.5" fill="#252423" stroke="#252423" stroke-width="0.3" textLength="91" lengthAdjust="spacingAndGlyphs" >NomeDoCenário</text>
<path d="M77,573 Q80,571 83.5,573.5 L80.5,575 Z" fill="#252423" />
<text x="205.2" y="554.3" font-size="12.5" fill="#252423" stroke="#252423" stroke-width="0.3" textLength="32.3" lengthAdjust="spacingAndGlyphs" >Áudio</text>
<text x="290.9" y="554.3" font-size="12.5" fill="#252423" stroke="#252423" stroke-width="0.3" textLength="57.5" lengthAdjust="spacingAndGlyphs" >Câmeras e</text>
<text x="290.9" y="569.6" font-size="12.5" fill="#252423" stroke="#252423" stroke-width="0.3" textLength="57" lengthAdjust="spacingAndGlyphs" >filmadoras</text>
<text x="392.09999999999997" y="554.3" font-size="12.5" fill="#252423" stroke="#252423" stroke-width="0.3" textLength="51.8" lengthAdjust="spacingAndGlyphs" >Telefones</text>
<text x="393.8" y="569.6" font-size="12.5" fill="#252423" stroke="#252423" stroke-width="0.3" textLength="48" lengthAdjust="spacingAndGlyphs" >celulares</text>
<text x="481.8" y="554.3" font-size="12.5" fill="#252423" stroke="#252423" stroke-width="0.3" textLength="81.5" lengthAdjust="spacingAndGlyphs" >Computadores</text>
<text x="612.1" y="554.3" font-size="12.5" fill="#252423" stroke="#252423" stroke-width="0.3" textLength="42.5" lengthAdjust="spacingAndGlyphs" >Jogos e</text>
<text x="602.5" y="569.6" font-size="12.5" fill="#252423" stroke="#252423" stroke-width="0.3" textLength="61.5" lengthAdjust="spacingAndGlyphs" >Brinquedos</text>
<text x="697.3000000000001" y="554.3" font-size="12.5" fill="#252423" stroke="#252423" stroke-width="0.3" textLength="94.0" lengthAdjust="spacingAndGlyphs" >Eletrodomésticos</text>
<text x="804.9000000000001" y="554.3" font-size="12.5" fill="#252423" stroke="#252423" stroke-width="0.3" textLength="89.4" lengthAdjust="spacingAndGlyphs" >Música, Filmes e</text>
<text x="819.1" y="569.6" font-size="12.5" fill="#252423" stroke="#252423" stroke-width="0.3" textLength="60.5" lengthAdjust="spacingAndGlyphs" >Audiolivros</text>
<text x="921.0" y="554.3" font-size="12.5" fill="#252423" stroke="#252423" stroke-width="0.3" textLength="59.6" lengthAdjust="spacingAndGlyphs" >TV e Vídeo</text>
<line x1="172" y1="540" x2="172" y2="576.5" stroke="#e1dfdd" stroke-width="1" />
<line x1="271.4" y1="540" x2="271.4" y2="576.5" stroke="#e1dfdd" stroke-width="1" />
<line x1="368.6" y1="540" x2="368.6" y2="576.5" stroke="#e1dfdd" stroke-width="1" />
<line x1="468.5" y1="540" x2="468.5" y2="576.5" stroke="#e1dfdd" stroke-width="1" />
<line x1="576.9" y1="540" x2="576.9" y2="576.5" stroke="#e1dfdd" stroke-width="1" />
<line x1="689.8" y1="540" x2="689.8" y2="576.5" stroke="#e1dfdd" stroke-width="1" />
<line x1="798.8" y1="540" x2="798.8" y2="576.5" stroke="#e1dfdd" stroke-width="1" />
<line x1="902.2" y1="540" x2="902.2" y2="576.5" stroke="#e1dfdd" stroke-width="1" />
<rect x="71.3" y="598.7" width="929.2" height="18.8" fill="#eaeaea" />
<line x1="71.3" y1="580.5" x2="1000.5" y2="580.5" stroke="#5f8a9b" stroke-width="1.2" />
<line x1="71.3" y1="635.5" x2="1000.5" y2="635.5" stroke="#dcdcdc" stroke-width="1" />
<line x1="172" y1="580.5" x2="172" y2="655" stroke="#6f95a5" stroke-width="1.3" />
<text x="75.3" y="594.7" font-size="12.5" fill="#252423" stroke="#252423" stroke-width="0.3" textLength="23.5" lengthAdjust="spacingAndGlyphs" >Real</text>
<text x="266.6" y="594.7" font-size="12.5" fill="#252423" stroke="#252423" stroke-width="0.3" text-anchor="end" textLength="80.8" lengthAdjust="spacingAndGlyphs" >273.081.757,15</text>
<text x="364.8" y="594.7" font-size="12.5" fill="#252423" stroke="#252423" stroke-width="0.3" text-anchor="end" textLength="80.8" lengthAdjust="spacingAndGlyphs" >196.351.552,35</text>
<text x="463.6" y="594.7" font-size="12.5" fill="#252423" stroke="#252423" stroke-width="0.3" text-anchor="end" textLength="80.8" lengthAdjust="spacingAndGlyphs" >140.294.583,32</text>
<text x="572.9" y="594.7" font-size="12.5" fill="#252423" stroke="#252423" stroke-width="0.3" text-anchor="end" textLength="80.8" lengthAdjust="spacingAndGlyphs" >261.297.336,05</text>
<text x="685.5" y="594.7" font-size="12.5" fill="#252423" stroke="#252423" stroke-width="0.3" text-anchor="end" textLength="80.8" lengthAdjust="spacingAndGlyphs" >370.423.511,89</text>
<text x="794.9" y="594.7" font-size="12.5" fill="#252423" stroke="#252423" stroke-width="0.3" text-anchor="end" textLength="80.8" lengthAdjust="spacingAndGlyphs" >132.379.784,72</text>
<text x="897.0999999999999" y="594.7" font-size="12.5" fill="#252423" stroke="#252423" stroke-width="0.3" text-anchor="end" textLength="80.8" lengthAdjust="spacingAndGlyphs" >273.081.757,15</text>
<text x="995.5" y="594.7" font-size="12.5" fill="#252423" stroke="#252423" stroke-width="0.3" text-anchor="end" textLength="80.8" lengthAdjust="spacingAndGlyphs" >273.081.757,15</text>
<text x="75.3" y="613" font-size="12.5" fill="#252423" stroke="#252423" stroke-width="0.3" textLength="67.5" lengthAdjust="spacingAndGlyphs" >Orçamento</text>
<text x="266.6" y="613" font-size="12.5" fill="#252423" stroke="#252423" stroke-width="0.3" text-anchor="end" textLength="80.8" lengthAdjust="spacingAndGlyphs" >273.081.757,15</text>
<text x="364.8" y="613" font-size="12.5" fill="#252423" stroke="#252423" stroke-width="0.3" text-anchor="end" textLength="80.8" lengthAdjust="spacingAndGlyphs" >213.969.197,63</text>
<text x="463.6" y="613" font-size="12.5" fill="#252423" stroke="#252423" stroke-width="0.3" text-anchor="end" textLength="80.8" lengthAdjust="spacingAndGlyphs" >208.272.507,11</text>
<text x="572.9" y="613" font-size="12.5" fill="#252423" stroke="#252423" stroke-width="0.3" text-anchor="end" textLength="80.8" lengthAdjust="spacingAndGlyphs" >739.999.803,45</text>
<text x="685.5" y="613" font-size="12.5" fill="#252423" stroke="#252423" stroke-width="0.3" text-anchor="end" textLength="80.8" lengthAdjust="spacingAndGlyphs" >657.569.205,45</text>
<text x="794.9" y="613" font-size="12.5" fill="#252423" stroke="#252423" stroke-width="0.3" text-anchor="end" textLength="80.8" lengthAdjust="spacingAndGlyphs" >188.923.519,59</text>
<text x="897.0999999999999" y="613" font-size="12.5" fill="#252423" stroke="#252423" stroke-width="0.3" text-anchor="end" textLength="80.8" lengthAdjust="spacingAndGlyphs" >317.881.677,16</text>
<text x="995.5" y="613" font-size="12.5" fill="#252423" stroke="#252423" stroke-width="0.3" text-anchor="end" textLength="80.8" lengthAdjust="spacingAndGlyphs" >274.982.507,83</text>
<text x="75.3" y="630.8" font-size="12.5" fill="#252423" stroke="#252423" stroke-width="0.3" textLength="50" lengthAdjust="spacingAndGlyphs" >Previsão</text>
<text x="266.6" y="630.8" font-size="12.5" fill="#252423" stroke="#252423" stroke-width="0.3" text-anchor="end" textLength="74.2" lengthAdjust="spacingAndGlyphs" >93.994.507,53</text>
<text x="364.8" y="630.8" font-size="12.5" fill="#252423" stroke="#252423" stroke-width="0.3" text-anchor="end" textLength="74.2" lengthAdjust="spacingAndGlyphs" >19.267.107,16</text>
<text x="463.6" y="630.8" font-size="12.5" fill="#252423" stroke="#252423" stroke-width="0.3" text-anchor="end" textLength="74.2" lengthAdjust="spacingAndGlyphs" >25.957.296,17</text>
<text x="572.9" y="630.8" font-size="12.5" fill="#252423" stroke="#252423" stroke-width="0.3" text-anchor="end" textLength="80.8" lengthAdjust="spacingAndGlyphs" >198.833.996,75</text>
<text x="685.5" y="630.8" font-size="12.5" fill="#252423" stroke="#252423" stroke-width="0.3" text-anchor="end" textLength="80.8" lengthAdjust="spacingAndGlyphs" >100.205.817,89</text>
<text x="794.9" y="630.8" font-size="12.5" fill="#252423" stroke="#252423" stroke-width="0.3" text-anchor="end" textLength="74.2" lengthAdjust="spacingAndGlyphs" >65.075.829,26</text>
<text x="897.0999999999999" y="630.8" font-size="12.5" fill="#252423" stroke="#252423" stroke-width="0.3" text-anchor="end" textLength="74.2" lengthAdjust="spacingAndGlyphs" >83.163.067,10</text>
<text x="995.5" y="630.8" font-size="12.5" fill="#252423" stroke="#252423" stroke-width="0.3" text-anchor="end" textLength="74.2" lengthAdjust="spacingAndGlyphs" >93.083.757,15</text>
<text x="75.3" y="649.4" font-size="12.5" fill="#252423" stroke="#252423" stroke-width="0.1" font-weight="bold" textLength="33" lengthAdjust="spacingAndGlyphs" >Total</text>
<text x="266.6" y="649.4" font-size="12.5" fill="#252423" stroke="#252423" stroke-width="0.1" font-weight="bold" text-anchor="end" textLength="88.0" lengthAdjust="spacingAndGlyphs" >273.081.757,15</text>
<text x="364.8" y="649.4" font-size="12.5" fill="#252423" stroke="#252423" stroke-width="0.1" font-weight="bold" text-anchor="end" textLength="88.0" lengthAdjust="spacingAndGlyphs" >339.899.543,67</text>
<text x="463.6" y="649.4" font-size="12.5" fill="#252423" stroke="#252423" stroke-width="0.1" font-weight="bold" text-anchor="end" textLength="88.0" lengthAdjust="spacingAndGlyphs" >385.831.517,65</text>
<text x="572.9" y="649.4" font-size="12.5" fill="#252423" stroke="#252423" stroke-width="0.1" font-weight="bold" text-anchor="end" textLength="98.3" lengthAdjust="spacingAndGlyphs" >1.028.876.377,95</text>
<text x="685.5" y="649.4" font-size="12.5" fill="#252423" stroke="#252423" stroke-width="0.1" font-weight="bold" text-anchor="end" textLength="98.3" lengthAdjust="spacingAndGlyphs" >1.197.288.567,65</text>
<text x="794.9" y="649.4" font-size="12.5" fill="#252423" stroke="#252423" stroke-width="0.1" font-weight="bold" text-anchor="end" textLength="88.0" lengthAdjust="spacingAndGlyphs" >651.523.379,01</text>
<text x="897.0999999999999" y="649.4" font-size="12.5" fill="#252423" stroke="#252423" stroke-width="0.1" font-weight="bold" text-anchor="end" textLength="88.0" lengthAdjust="spacingAndGlyphs" >659.528.779,05</text>
<text x="995.5" y="649.4" font-size="12.5" fill="#252423" stroke="#252423" stroke-width="0.1" font-weight="bold" text-anchor="end" textLength="88.0" lengthAdjust="spacingAndGlyphs" >273.081.757,15</text>
<path d="M1062.5,157.5 L1057.5,162.2 L1062.5,167" fill="none" stroke="#3b3a39" stroke-width="1.1" />
<path d="M1066,189 V201 L1056.5,195 Z" fill="none" stroke="#3b3a39" stroke-width="1.1" />
<text x="1056" y="210.3" font-size="14" fill="#252423" font-weight="bold" textLength="39.5" lengthAdjust="spacingAndGlyphs" transform="rotate(90 1056 210.3)">Filtros</text>
<text x="1084.6" y="168.2" font-size="15" fill="#252423" stroke="#252423" stroke-width="0.45" textLength="89" lengthAdjust="spacingAndGlyphs" >Visualizações</text>
<path d="M1223.5,157.5 L1228.5,162.5 L1223.5,167.5" fill="none" stroke="#3b3a39" stroke-width="1.1" />
<g transform="translate(1083.6,188.6)" fill="none" stroke="#3b3a39" stroke-width="1"><path d="M1,0 V15.5 H16"/><rect x="3" y="1.5" width="8" height="3" fill="#5b9fd6"/><rect x="3" y="6.5" width="11" height="3" fill="#fff"/><rect x="3" y="11" width="5" height="2.5" fill="#5b9fd6"/></g>
<g transform="translate(1109,188.6)" fill="none" stroke="#3b3a39" stroke-width="1"><path d="M1,1 V15.5 H16"/><rect x="3" y="7" width="2.6" height="8.5" fill="#5b9fd6"/><rect x="7" y="4" width="2.6" height="11.5" fill="#fff"/><rect x="11" y="2" width="2.6" height="13.5" fill="#5b9fd6"/></g>
<g transform="translate(1134.4,188.6)" fill="none" stroke="#3b3a39" stroke-width="1"><path d="M1,0 V15.5 H16"/><rect x="3" y="1.5" width="12" height="2.5" fill="#5b9fd6"/><rect x="3" y="5.5" width="8" height="2.5" fill="#fff"/><rect x="3" y="9.5" width="10" height="2.5" fill="#5b9fd6"/><rect x="3" y="13" width="5" height="1.5" fill="#fff"/></g>
<g transform="translate(1160.2,188.6)" fill="none" stroke="#3b3a39" stroke-width="1"><path d="M1,1 V15.5 H16"/><rect x="2" y="1" width="4" height="14.5" fill="#5b9fd6"/><rect x="6.5" y="5" width="3" height="10.5" fill="#5b9fd6"/><rect x="10.5" y="8" width="2" height="7.5" fill="#fff"/><rect x="13" y="6" width="2" height="9.5" fill="#fff"/></g>
<g transform="translate(1185.8,188.6)" fill="none" stroke="#3b3a39" stroke-width="1"><path d="M1,0 V15.5 H16"/><rect x="2.5" y="1.5" width="12.5" height="3" fill="#5b9fd6"/><rect x="2.5" y="6" width="12.5" height="3" fill="#5b9fd6"/><rect x="2.5" y="10.5" width="12.5" height="3" fill="#fff"/></g>
<g transform="translate(1211.6,188.6)" fill="none" stroke="#3b3a39" stroke-width="1"><path d="M1,0.5 V15.5 H16"/><rect x="2.5" y="1.5" width="3" height="14" fill="#5b9fd6"/><rect x="7" y="1.5" width="3" height="14" fill="#5b9fd6"/><rect x="11.5" y="1.5" width="3" height="14" fill="#5b9fd6"/></g>
<g transform="translate(1083.6,212)" fill="none" stroke="#3b3a39" stroke-width="1"><path d="M1,0.5 V15.5 H16"/><path d="M2,11 L6,5 L10,9 L15,3"/><path d="M2,13 L7,8 L10,11 L15,6" stroke="#555"/></g>
<g transform="translate(1109,212)" fill="none" stroke="#3b3a39" stroke-width="1"><path d="M0.5,15.5 H16"/><path d="M1,15 L5.5,4 L9,9 L12,2 L15.5,15 Z" fill="#fff"/><path d="M1.5,15 L5,9 L8,12 L11,7 L15,15 Z" fill="#5b9fd6" stroke="none"/></g>
<g transform="translate(1134.4,212)" fill="none" stroke="#3b3a39" stroke-width="1"><path d="M1,0.5 V15.5 H16"/><path d="M1.5,3 L5.5,9 L10,3 L15,9 V12 L10,7 L5.5,13 L1.5,7 Z" fill="#5b9fd6"/></g>
<g transform="translate(1160.2,212)" fill="none" stroke="#3b3a39" stroke-width="1"><path d="M1,0.5 V15.5 H16"/><rect x="2.5" y="3" width="2.5" height="12.5" fill="#5b9fd6"/><rect x="6" y="6" width="2.5" height="9.5" fill="#fff"/><rect x="9.5" y="4" width="2.5" height="11.5" fill="#5b9fd6"/><path d="M2,8 L7,3 L11,7 L15,2"/></g>
<g transform="translate(1185.8,212)" fill="none" stroke="#3b3a39" stroke-width="1"><path d="M1,0.5 V15.5 H16"/><rect x="3" y="8" width="2.5" height="7.5"/><rect x="7" y="3" width="2.5" height="12.5" fill="#5b9fd6"/><rect x="11" y="6" width="2.5" height="9.5"/><path d="M2,10 L8,7 L15,4"/></g>
<g transform="translate(1211.6,212)" fill="none" stroke="#3b3a39" stroke-width="1"><path d="M1,0.5 V15.5 H16"/><path d="M2,4 Q6,12 9,6 Q12,1 15,4 V13 H2 Z" fill="#7a9a6a" stroke="none"/><path d="M2,6 Q7,13 10,8 Q12,5 15,7 V11 Q11,9 9,12 Q5,13 2,9 Z" fill="#5b9fd6" stroke="none"/></g>
<g transform="translate(1083.6,234.9)" fill="none" stroke="#3b3a39" stroke-width="1"><path d="M1,0.5 V15.5 H16"/><rect x="3" y="4" width="2.5" height="11.5"/><rect x="6.5" y="7" width="2.5" height="5"/><rect x="10" y="3" width="2.5" height="5" fill="#5b9fd6"/><rect x="13" y="1" width="2.5" height="14.5"/></g>
<g transform="translate(1109,234.9)" fill="none" stroke="#3b3a39" stroke-width="1"><path d="M0.5,1 H15.5 L12.5,5 H3.5 Z" fill="#5b9fd6" stroke="none"/><path d="M3,5.5 H13 L11,9.5 H5 Z" fill="#5b9fd6" stroke="none"/><path d="M5,10 H11 L10,13 H6 Z" fill="#5b9fd6" stroke="none"/><path d="M6,13.5 H10 V15.5 H6 Z" fill="#5b9fd6" stroke="none"/></g>
<g transform="translate(1134.4,234.9)" fill="none" stroke="#3b3a39" stroke-width="1"><path d="M1,0.5 V15.5 H16"/><circle cx="5" cy="11" r="1" fill="#323130"/><circle cx="8" cy="8" r="1" fill="#323130"/><circle cx="12" cy="4" r="1.2" fill="#323130"/><circle cx="11" cy="10" r="1" fill="#323130"/><circle cx="14" cy="12" r="0.8" fill="#323130"/></g>
<g transform="translate(1160.2,234.9)" fill="none" stroke="#3b3a39" stroke-width="1"><circle cx="8" cy="8" r="7.2" fill="#fff"/><path d="M8,8 V0.8 A7.2,7.2 0 0 1 13.5,12.6 Z" fill="#5b9fd6"/></g>
<g transform="translate(1185.8,234.9)" fill="none" stroke="#3b3a39" stroke-width="1"><circle cx="8" cy="8" r="7" fill="#5b9fd6"/><circle cx="8" cy="8" r="4" fill="#efeeeb"/></g>
<g transform="translate(1211.6,234.9)" fill="none" stroke="#3b3a39" stroke-width="1"><rect x="0.5" y="0.5" width="15" height="15" fill="#5b9fd6"/><path d="M8,0.5 V15.5 M0.5,8 H8 M8,5.5 H15.5 M11.5,5.5 V15.5 M11.5,10.5 H15.5" stroke="#efeeeb" stroke-width="1.3"/></g>
<g transform="translate(1083.6,258)" fill="none" stroke="#3b3a39" stroke-width="1"><circle cx="8" cy="7.5" r="6" fill="#8fb49a" stroke="#2e5a3e"/><path d="M5,4 Q9,6 7,10 Q10,12 11,9" stroke="#2e5a3e" stroke-width="0.9"/><path d="M4,15.5 H12 M8,13.5 V15.5" stroke="#2e5a3e"/></g>
<g transform="translate(1109,258)" fill="none" stroke="#3b3a39" stroke-width="1"><path d="M1,2 L5,0.5 L8,3 L11,1 L15.5,2 L15,8 L11,13 L6,15 L2,12 L1,7 Z" fill="#5b9fd6"/><path d="M2,9 Q5,8 7,11 Q6,14 4,14 Z" fill="#fff"/></g>
<g transform="translate(1134.4,258)" fill="none" stroke="#3b3a39" stroke-width="1"><path d="M1,12 Q8,1 15,12" stroke="#5b9fd6" stroke-width="3.2"/></g>
<g transform="translate(1160.2,258)" fill="none" stroke="#3b3a39" stroke-width="1"><path d="M1,13 Q8,0 15,13 M3.5,13 Q8,4.5 12.5,13 M6,13 Q8,9 10,13" stroke="#323130"/><path d="M2.2,13 Q8,2 13.8,13" stroke="#5b9fd6" stroke-width="1.2"/></g>
<g transform="translate(1185.8,258)" fill="none" stroke="#3b3a39" stroke-width="1"><rect x="0.5" y="2" width="15" height="12.5" fill="#fff"/><rect x="3" y="5" width="10" height="6" fill="#8cc0e6" stroke="none"/><path d="M3,10 H13 M5,6 V11 M8,7 V11 M11,5 V11" stroke="#555" stroke-width="0.8"/></g>
<g transform="translate(1211.6,258)" fill="none" stroke="#3b3a39" stroke-width="1"><rect x="0.5" y="2" width="15" height="12.5" fill="#fff"/><rect x="3" y="5" width="4" height="3" fill="#5b9fd6" stroke="none"/><rect x="9" y="5" width="4" height="3" fill="#e07060" stroke="none"/><path d="M3,10.5 H12" stroke="#555" stroke-width="0.8"/></g>
<g transform="translate(1083.6,281.4)" fill="none" stroke="#3b3a39" stroke-width="1"><rect x="0.5" y="0.5" width="15" height="15" fill="#fff"/><path d="M0.5,4 H15.5"/><path d="M6,8 H12 L15,11 L11,13 V15.5" fill="#ddd"/><path d="M3,7 H6 M3,10 H5 M3,13 H6" stroke-width="0.8"/></g>
<g transform="translate(1109,281.4)" fill="none" stroke="#3b3a39" stroke-width="1"><rect x="0.5" y="1" width="15" height="14" fill="#fff"/><path d="M0.5,4.5 H15.5 M0.5,8 H15.5 M0.5,11.5 H15.5 M5.5,4.5 V15 M10.5,4.5 V15" stroke-width="0.9"/></g>
<g transform="translate(1134.4,281.4)" fill="none" stroke="#3b3a39" stroke-width="1"><rect x="0.5" y="1" width="15" height="14" fill="#5b9fd6"/><path d="M0.5,4.5 H15.5 M0.5,8 H15.5 M0.5,11.5 H15.5 M5.5,4.5 V15 M10.5,4.5 V15" stroke="#d8ecf8" stroke-width="0.9"/></g>
<text x="1168.2" y="295.5" font-size="14.5" fill="#3e80b8" stroke="#3e80b8" stroke-width="0.6" text-anchor="middle">R</text>
<text x="1194.2" y="295.5" font-size="14.5" fill="#3e80b8" stroke="#3e80b8" stroke-width="0.6" text-anchor="middle" textLength="16" lengthAdjust="spacingAndGlyphs">Py</text>
<g transform="translate(1211.6,281.4)" fill="none" stroke="#3b3a39" stroke-width="1"><path d="M1,0.5 V15.5 H16 M3,4 H12 M3,8 H9 M3,12 H7"/><circle cx="13.5" cy="3" r="2" fill="#2b6f9e" stroke="none"/></g>
<g transform="translate(1083.6,304.4)" fill="none" stroke="#3b3a39" stroke-width="1"><path d="M0.5,1 H15.5 V11 H6 L3,14.5 V11 H0.5 Z" fill="#fff" stroke="#2e78b0" stroke-width="1.3"/></g>
<g transform="translate(1109,304.4)" fill="none" stroke="#3b3a39" stroke-width="1"><path d="M9,1 H0.5 V11 H3 V14 L6,11 H7" fill="#fff"/><path d="M10,4 H15 M10,7 H15 M10,10 H15 M10,13 H15 M11,3 V15 M13.5,3 V15" stroke="#e0a050" stroke-width="0.9"/></g>
<g transform="translate(1134.4,304.4)" fill="none" stroke="#3b3a39" stroke-width="1"><rect x="0.5" y="0.5" width="15" height="15" fill="#5b9fd6" stroke="none"/><path d="M0.5,0.5 H5 V5 H0.5 Z M11,11 H15.5 V15.5 H11 Z" fill="#e06a3a" stroke="none"/><path d="M6,4 Q9,2 10,6 Q8,9 5,9 Q3,12 6,15 H3 Q0.5,12 3,8 Q4,5 6,4 Z" fill="#fff" stroke="none"/></g>
<g transform="translate(1160.2,304.4)" fill="none" stroke="#3b3a39" stroke-width="1"><path d="M8,0.5 L15.5,8 L8,15.5 L0.5,8 Z" transform="rotate(22 8 8)" fill="#fff"/><path d="M5,5 L11,11 M11,5 L5,11 M5,5 L8,8" stroke-width="1.1"/></g>
<circle cx="1187.5" cy="312.4" r="1.2" fill="#3b3a39" />
<circle cx="1193.5" cy="312.4" r="1.2" fill="#3b3a39" />
<circle cx="1199.5" cy="312.4" r="1.2" fill="#3b3a39" />
<line x1="1076" y1="325.5" x2="1240" y2="325.5" stroke="#dcdad6" stroke-width="1" />
<g fill="none" stroke="#3b3a39" stroke-width="1.1"><path d="M1095,333.5 H1107" stroke-width="1.4"/><path d="M1095,337 H1113 M1095,341 H1113 M1095,345 H1113 M1095,350.5 H1113 M1095,337 V350.5 M1113,337 V350.5" stroke-dasharray="1.6 1.2"/></g>
<rect x="1085.4" y="356.4" width="36.5" height="3" fill="#dcc052" rx="1" />
<g fill="none" stroke="#3b3a39" stroke-width="1.3"><rect x="1131.5" y="333.5" width="17" height="5.5" rx="1.5"/><path d="M1148.5,336 H1150 V341.5 H1140.5 V344"/><rect x="1138.5" y="344" width="4" height="7.5" rx="1"/></g>
<g fill="none" stroke="#3b3a39" stroke-width="1.3"><circle cx="1175.5" cy="341.5" r="8"/><path d="M1181,347.5 L1186,352.5" stroke-width="1.6"/><path d="M1171,345 V341 M1174,345 V339 M1177,345 V342 M1180,345 V338 M1170,339 L1175,336 L1181,337" stroke-width="0.9"/></g>
<text x="1087.7" y="377.3" font-size="12" fill="#252423" stroke="#252423" stroke-width="0.3" textLength="26" lengthAdjust="spacingAndGlyphs" >Valor</text>
<rect x="1081.5" y="385.8" width="152" height="32.69999999999999" fill="#f7f7f5" stroke="#cfcdc9" stroke-width="1" stroke-dasharray="2 2"/>
<rect x="1084.3" y="389.3" width="146" height="20.5" fill="#e6e5e2" stroke="#d2d0cc" stroke-width="1" />
<text x="1088.4" y="404.3" font-size="12" fill="#252423" stroke="#252423" stroke-width="0.3" textLength="66.5" lengthAdjust="spacingAndGlyphs" >NomeDoMês</text>
<path d="M1203.8,397.3 L1208.3,401.8 L1212.8,397.3" fill="none" stroke="#3b3a39" stroke-width="1.1" />
<path d="M1218.6,396.1 L1226.4,403.90000000000003 M1226.4,396.1 L1218.6,403.90000000000003" fill="none" stroke="#3b3a39" stroke-width="1.1" />
<text x="1088" y="440.5" font-size="12" fill="#252423" stroke="#252423" stroke-width="0.3" textLength="84.5" lengthAdjust="spacingAndGlyphs" >NomeDoCenário</text>
<rect x="1081.5" y="449.2" width="152" height="33.0" fill="#f7f7f5" stroke="#cfcdc9" stroke-width="1" stroke-dasharray="2 2"/>
<rect x="1084.3" y="453.3" width="146" height="20.5" fill="#e6e5e2" stroke="#d2d0cc" stroke-width="1" />
<text x="1088.4" y="468.3" font-size="12" fill="#252423" stroke="#252423" stroke-width="0.3" textLength="44" lengthAdjust="spacingAndGlyphs" >DimData</text>
<path d="M1203.8,461.3 L1208.3,465.8 L1212.8,461.3" fill="none" stroke="#3b3a39" stroke-width="1.1" />
<path d="M1218.6,460.1 L1226.4,467.90000000000003 M1226.4,460.1 L1218.6,467.90000000000003" fill="none" stroke="#3b3a39" stroke-width="1.1" />
<text x="1088" y="507.3" font-size="12" fill="#252423" stroke="#252423" stroke-width="0.3" textLength="113.5" lengthAdjust="spacingAndGlyphs" >Dim CategoriaProduto</text>
<text x="1091.2" y="533.9" font-size="12" fill="#252423" stroke="#252423" stroke-width="0.3" textLength="19.3" lengthAdjust="spacingAndGlyphs" >Pāu</text>
<rect x="1115.5" y="524" width="33.5" height="14" fill="#4a4947" rx="7" />
<circle cx="1140.5" cy="531" r="4.2" fill="#ffffff" />
<circle cx="1123.2" cy="531" r="2.6" fill="none" stroke="#ffffff" stroke-width="1.1" />
<line x1="1126" y1="531" x2="1134.5" y2="531" stroke="#ffffff" stroke-width="1.1" />
<rect x="1081.5" y="551.7" width="152" height="25" fill="#ffffff" stroke="#cfcdc9" stroke-width="1" stroke-dasharray="2 2"/>
<text x="1090.3" y="568.1" font-size="12" fill="#252423" stroke="#252423" stroke-width="0.3" textLength="134" lengthAdjust="spacingAndGlyphs" >Asɑreɡar as nesoeos dat...</text>
<rect x="1242.4" y="146.5" width="162.6" height="217.5" fill="none" stroke="#ab272d" stroke-width="2.3" />
<text x="1250.3" y="168.4" font-size="15" fill="#252423" stroke="#252423" stroke-width="0.75" textLength="42" lengthAdjust="spacingAndGlyphs" >Dados</text>
<path d="M1391.5,157.5 L1397,162.7 L1391.5,168" fill="none" stroke="#3b3a39" stroke-width="1.1" />
<rect x="1245.8" y="188" width="156.2" height="23" fill="#ffffff" stroke="#c8c6c4" stroke-width="1" />
<line x1="1246" y1="211" x2="1402" y2="211" stroke="#8a8886" stroke-width="1" />
<circle cx="1260.5" cy="197.8" r="3.8" fill="none" stroke="#3b3a39" stroke-width="1.1" />
<line x1="1257.8" y1="200.6" x2="1252.8" y2="205.6" stroke="#3b3a39" stroke-width="1.2" />
<text x="1272.2" y="204.1" font-size="12" fill="#605e5c" stroke="#605e5c" stroke-width="0.3" textLength="40" lengthAdjust="spacingAndGlyphs" >Dastem</text>
<path d="M1250.6,225.8 L1255.6,230.60000000000002 L1250.6,235.4" fill="none" stroke="#3b3a39" stroke-width="1" />
<rect x="1263.3" y="224.5" width="11.4" height="11.8" fill="none" stroke="#4a4948" stroke-width="1.3" />
<line x1="1263.3" y1="227.5" x2="1274.7" y2="227.5" stroke="#4a4948" stroke-width="0.8" />
<line x1="1263.3" y1="230.4" x2="1274.7" y2="230.4" stroke="#4a4948" stroke-width="0.8" />
<line x1="1263.3" y1="233.3" x2="1274.7" y2="233.3" stroke="#4a4948" stroke-width="0.8" />
<line x1="1267.1" y1="224.5" x2="1267.1" y2="236.3" stroke="#4a4948" stroke-width="0.8" />
<line x1="1270.9" y1="224.5" x2="1270.9" y2="236.3" stroke="#4a4948" stroke-width="0.8" />
<text x="1280.3" y="234.8" font-size="12" fill="#252423" stroke="#252423" stroke-width="0.3" textLength="50" lengthAdjust="spacingAndGlyphs" >DimConta</text>
<path d="M1250.6,247.8 L1255.6,252.60000000000002 L1250.6,257.40000000000003" fill="none" stroke="#3b3a39" stroke-width="1" />
<rect x="1263.3" y="246.5" width="11.4" height="11.8" fill="none" stroke="#4a4948" stroke-width="1.3" />
<line x1="1263.3" y1="249.5" x2="1274.7" y2="249.5" stroke="#4a4948" stroke-width="0.8" />
<line x1="1263.3" y1="252.4" x2="1274.7" y2="252.4" stroke="#4a4948" stroke-width="0.8" />
<line x1="1263.3" y1="255.3" x2="1274.7" y2="255.3" stroke="#4a4948" stroke-width="0.8" />
<line x1="1267.1" y1="246.5" x2="1267.1" y2="258.3" stroke="#4a4948" stroke-width="0.8" />
<line x1="1270.9" y1="246.5" x2="1270.9" y2="258.3" stroke="#4a4948" stroke-width="0.8" />
<text x="1280.3" y="256.8" font-size="12" fill="#252423" stroke="#252423" stroke-width="0.3" textLength="44.5" lengthAdjust="spacingAndGlyphs" >DimData</text>
<path d="M1250.6,269.8 L1255.6,274.6 L1250.6,279.40000000000003" fill="none" stroke="#3b3a39" stroke-width="1" />
<rect x="1263.3" y="268.5" width="11.4" height="11.8" fill="none" stroke="#4a4948" stroke-width="1.3" />
<line x1="1263.3" y1="271.5" x2="1274.7" y2="271.5" stroke="#4a4948" stroke-width="0.8" />
<line x1="1263.3" y1="274.40000000000003" x2="1274.7" y2="274.40000000000003" stroke="#4a4948" stroke-width="0.8" />
<line x1="1263.3" y1="277.3" x2="1274.7" y2="277.3" stroke="#4a4948" stroke-width="0.8" />
<line x1="1267.1" y1="268.5" x2="1267.1" y2="280.3" stroke="#4a4948" stroke-width="0.8" />
<line x1="1270.9" y1="268.5" x2="1270.9" y2="280.3" stroke="#4a4948" stroke-width="0.8" />
<text x="1280.3" y="278.8" font-size="12" fill="#252423" stroke="#252423" stroke-width="0.3" textLength="110" lengthAdjust="spacingAndGlyphs" >DimCategoriaProduto</text>
<path d="M1250.6,291.8 L1255.6,296.6 L1250.6,301.40000000000003" fill="none" stroke="#3b3a39" stroke-width="1" />
<rect x="1263.3" y="290.5" width="11.4" height="11.8" fill="none" stroke="#4a4948" stroke-width="1.3" />
<line x1="1263.3" y1="293.5" x2="1274.7" y2="293.5" stroke="#4a4948" stroke-width="0.8" />
<line x1="1263.3" y1="296.40000000000003" x2="1274.7" y2="296.40000000000003" stroke="#4a4948" stroke-width="0.8" />
<line x1="1263.3" y1="299.3" x2="1274.7" y2="299.3" stroke="#4a4948" stroke-width="0.8" />
<line x1="1267.1" y1="290.5" x2="1267.1" y2="302.3" stroke="#4a4948" stroke-width="0.8" />
<line x1="1270.9" y1="290.5" x2="1270.9" y2="302.3" stroke="#4a4948" stroke-width="0.8" />
<text x="1280.3" y="300.8" font-size="12" fill="#252423" stroke="#252423" stroke-width="0.3" textLength="59.5" lengthAdjust="spacingAndGlyphs" >DimCenário</text>
<path d="M1250.6,313.8 L1255.6,318.6 L1250.6,323.40000000000003" fill="none" stroke="#3b3a39" stroke-width="1" />
<rect x="1263.3" y="312.5" width="11.4" height="11.8" fill="none" stroke="#4a4948" stroke-width="1.3" />
<line x1="1263.3" y1="315.5" x2="1274.7" y2="315.5" stroke="#4a4948" stroke-width="0.8" />
<line x1="1263.3" y1="318.40000000000003" x2="1274.7" y2="318.40000000000003" stroke="#4a4948" stroke-width="0.8" />
<line x1="1263.3" y1="321.3" x2="1274.7" y2="321.3" stroke="#4a4948" stroke-width="0.8" />
<line x1="1267.1" y1="312.5" x2="1267.1" y2="324.3" stroke="#4a4948" stroke-width="0.8" />
<line x1="1270.9" y1="312.5" x2="1270.9" y2="324.3" stroke="#4a4948" stroke-width="0.8" />
<text x="1280.3" y="322.8" font-size="12" fill="#252423" stroke="#252423" stroke-width="0.3" textLength="105" lengthAdjust="spacingAndGlyphs" >FatoPlanoEstratégico</text>
<text x="1272" y="357.2" font-size="16.5" fill="#c0323a" stroke="#c0323a" stroke-width="0.3" textLength="110" lengthAdjust="spacingAndGlyphs" >Painel de Dados</text>
<path d="M46,729 L43,733 L46,737" fill="none" stroke="#b8b6b2" stroke-width="1.3" />
<path d="M61,729 L64,733 L61,737" fill="none" stroke="#b8b6b2" stroke-width="1.3" />
<line x1="70.5" y1="718" x2="70.5" y2="748" stroke="#e4e2de" stroke-width="1" />
<rect x="71" y="718.5" width="75.5" height="29.5" fill="#ffffff" />
<rect x="71" y="745.5" width="75.5" height="3" fill="#dcc052" />
<text x="87.7" y="737.7" font-size="12.5" fill="#252423" stroke="#252423" stroke-width="0.7" textLength="42" lengthAdjust="spacingAndGlyphs" >Página 1</text>
<rect x="146.5" y="719.3" width="34" height="28.5" fill="#e8bd1d" />
<path d="M163.4,728.5 V738.5 M158.4,733.5 H168.4" fill="none" stroke="#2e2d14" stroke-width="2.2" />
<text x="5.2" y="764" font-size="11.5" fill="#252423" stroke="#252423" stroke-width="0.3" textLength="67.5" lengthAdjust="spacingAndGlyphs" >Página 1 de 1</text>
<line x1="36" y1="711.9" x2="1045.5" y2="711.9" stroke="#444444" stroke-width="1.8" stroke-dasharray="2 2.2"/>
</svg>
</body></html>
